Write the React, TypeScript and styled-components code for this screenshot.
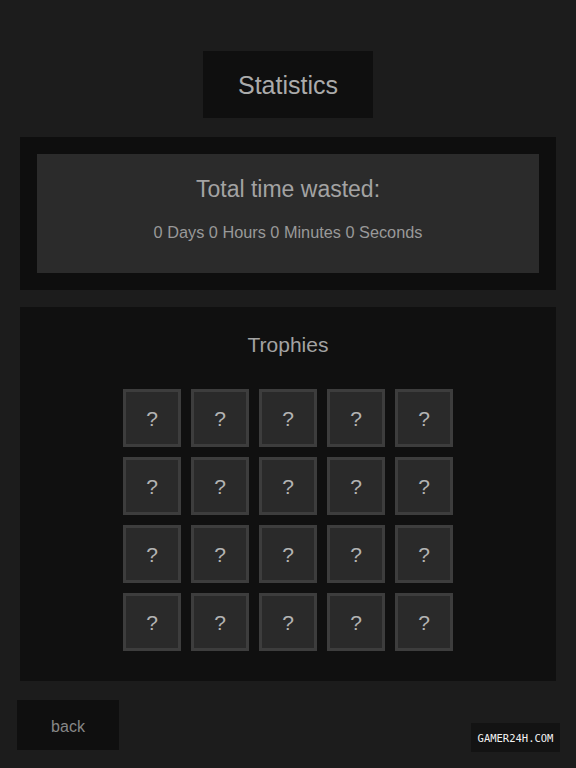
import React from "react";
import styled, { createGlobalStyle } from "styled-components";

const Global = createGlobalStyle`
  html, body { margin: 0; padding: 0; background: #1c1c1c; }
  body { font-family: "Liberation Sans", Arial, sans-serif; }
`;

const Page = styled.div`
  position: relative;
  width: 576px;
  height: 768px;
  background: #1c1c1c;
  display: flex;
  flex-direction: column;
  align-items: stretch;
  padding-top: 51px;
  box-sizing: border-box;
`;

const TitleBox = styled.div`
  align-self: center;
  width: 170px;
  height: 67px;
  box-sizing: border-box;
  padding-top: 2px;
  background: #0f0f0f;
  display: flex;
  align-items: center;
  justify-content: center;
  color: #ababab;
  font-size: 25px;
`;

const OuterPanel = styled.div<{ $mt: number }>`
  margin: ${(p) => p.$mt}px 20px 0 20px;
  background: #0e0e0e;
  padding: 17px;
`;

const TimeCard = styled.div`
  background: #2b2b2b;
  height: 119px;
  box-sizing: border-box;
  padding-top: 22px;
  display: flex;
  flex-direction: column;
  align-items: center;
`;

const Heading = styled.div`
  color: #a3a3a3;
  font-size: 23px;
  line-height: 26px;
`;

const SubText = styled.div`
  margin-top: 20px;
  color: #999999;
  font-size: 16.3px;
  line-height: 20px;
`;

const TrophyPanel = styled.div`
  margin: 17px 20px 0 20px;
  background: #101010;
  height: 374px;
  box-sizing: border-box;
  padding-top: 25px;
  display: flex;
  flex-direction: column;
  align-items: center;
`;

const TrophyTitle = styled.div`
  color: #a3a3a3;
  font-size: 21px;
  line-height: 26px;
`;

const Grid = styled.div`
  margin-top: 31px;
  display: grid;
  grid-template-columns: repeat(5, 58px);
  grid-auto-rows: 58px;
  gap: 10px;
`;

const Tile = styled.div`
  box-sizing: border-box;
  border: 3px solid #3d3d3d;
  background: #2a2a2a;
  display: flex;
  align-items: center;
  justify-content: center;
  padding-top: 1px;
  color: #b3b3b3;
  font-size: 21px;
`;

const BackButton = styled.div`
  margin: 19px 0 0 17px;
  width: 102px;
  height: 50px;
  box-sizing: border-box;
  padding-top: 3px;
  background: #0f0f0f;
  display: flex;
  align-items: center;
  justify-content: center;
  color: #878787;
  font-size: 16px;
`;

const Watermark = styled.div`
  position: absolute;
  left: 471px;
  top: 723px;
  width: 89px;
  height: 29px;
  background: #131313;
  display: flex;
  align-items: center;
  justify-content: center;
  color: #f2f2f2;
  font-family: "DejaVu Sans Mono", monospace;
  font-size: 10.5px;
`;

export default function App() {
  const tiles = Array.from({ length: 20 }, (_, i) => i);
  return (
    <>
      <Global />
      <Page>
        <TitleBox>Statistics</TitleBox>
        <OuterPanel $mt={19}>
          <TimeCard>
            <Heading>Total time wasted:</Heading>
            <SubText>0 Days 0 Hours 0 Minutes 0 Seconds</SubText>
          </TimeCard>
        </OuterPanel>
        <TrophyPanel>
          <TrophyTitle>Trophies</TrophyTitle>
          <Grid>
            {tiles.map((i) => (
              <Tile key={i}>?</Tile>
            ))}
          </Grid>
        </TrophyPanel>
        <BackButton>back</BackButton>
        <Watermark>GAMER24H.COM</Watermark>
      </Page>
    </>
  );
}
